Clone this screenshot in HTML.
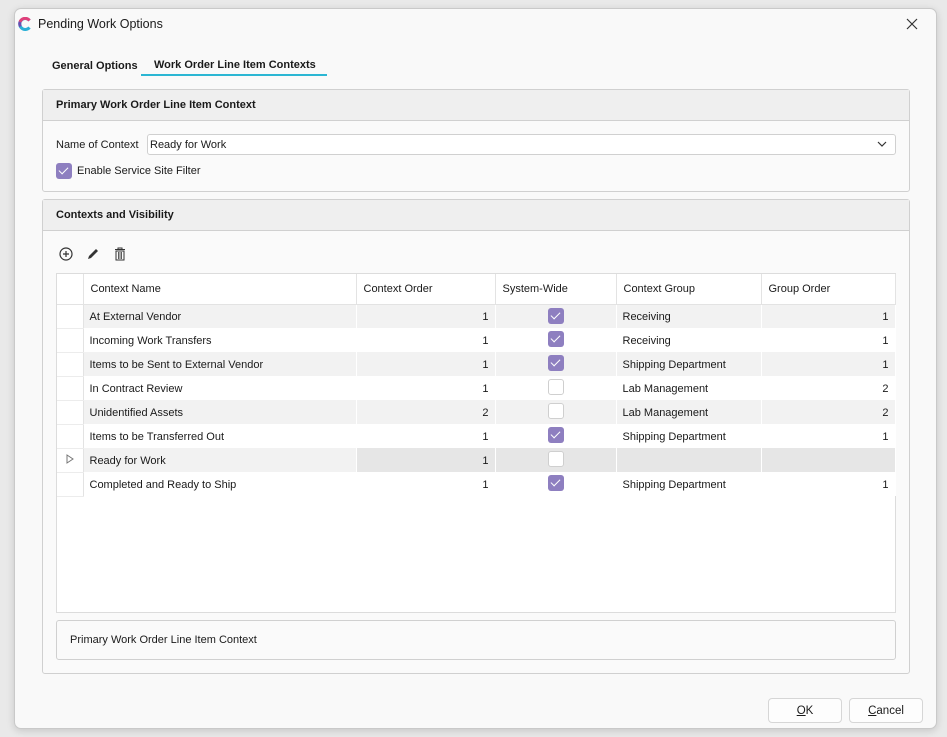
<!DOCTYPE html>
<html><head><style>
*{box-sizing:border-box;margin:0;padding:0}
body{width:947px;height:737px;background:#e9e9e9;font-family:"Liberation Sans",sans-serif;font-size:11px;color:#1a1a1a;position:relative;overflow:hidden}
.a{position:absolute}
.win{left:14px;top:8px;width:923px;height:721px;background:#f9f9f9;border:1px solid #c9c9c9;border-radius:7px;box-shadow:0 2px 8px rgba(0,0,0,.15)}
.panel{border:1px solid #d0d0d0;border-radius:3px;background:#fafafa}
.ph{background:#efefef;border-bottom:1px solid #d0d0d0;height:31px;line-height:31px;padding-left:13px;font-weight:bold;font-size:11px}
.cb{width:16px;height:16px;border-radius:3px;background:#8e7fc0;position:absolute}
.cb:after{content:"";position:absolute;left:5px;top:2px;width:4px;height:8px;border:solid #fff;border-width:0 1.3px 1.3px 0;transform:rotate(45deg)}
.ub{width:16px;height:16px;border-radius:3px;background:#fff;border:1px solid #cfcfcf;position:absolute}
table{border-collapse:collapse;table-layout:fixed}
td{height:24px;padding:1px 6px 0;white-space:nowrap;border-right:1px solid #fff;position:relative}
tr.h td{height:30px;background:#fff;border-right:1px solid #e3e3e3;border-bottom:1px solid #e3e3e3;padding-left:7px}
tr.g td{background:#f2f2f2}
tr.s td{background:#e6e6e6}
td.r{text-align:right}
td.rh{background:#fff!important;border-right:1px solid #e3e3e3;border-bottom:1px solid #ececec}
.btn{border:1px solid #d6d6d6;border-radius:4px;background:#fdfdfd;width:74px;height:25px;text-align:center;line-height:24px;font-size:11.5px}
</style></head><body>
<div class="a win"></div>
<svg class="a" style="left:18px;top:17px" width="14" height="14" viewBox="0 0 14 14"><path d="M11.5 3.5A5.5 5.5 0 1 0 11.5 10.5" fill="none" stroke="#2ab0d6" stroke-width="3"/><path d="M11.5 3.5A5.5 5.5 0 0 0 2 5" fill="none" stroke="#e0407a" stroke-width="3"/><path d="M2 5A5.5 5.5 0 0 0 2.5 9.5" fill="none" stroke="#6a4fb0" stroke-width="3"/></svg>
<div class="a" style="left:38px;top:17px;font-size:12.5px">Pending Work Options</div>
<svg class="a" style="left:906px;top:18px" width="12" height="12"><path d="M1 1L11 11M11 1L1 11" stroke="#333" stroke-width="1.2"/></svg>
<div class="a" style="left:52px;top:60px;font-weight:bold;font-size:11px">General Options</div>
<div class="a" style="left:154px;top:59px;font-weight:bold;font-size:11px">Work Order Line Item Contexts</div>
<div class="a" style="left:141px;top:74px;width:186px;height:2px;background:#2bb6d3"></div>

<div class="a panel" style="left:42px;top:89px;width:868px;height:103px"><div class="ph">Primary Work Order Line Item Context</div></div>
<div class="a" style="left:56px;top:139px">Name of Context</div>
<div class="a" style="left:147px;top:134px;width:749px;height:21px;border:1px solid #d0d0d0;border-radius:3px;background:#fff;padding:4px 0 0 2px">Ready for Work</div>
<svg class="a" style="left:877px;top:141px" width="10" height="6"><path d="M1 1L5 5L9 1" stroke="#333" fill="none" stroke-width="1.2"/></svg>
<div class="cb" style="left:56px;top:163px"></div>
<div class="a" style="left:77px;top:165px">Enable Service Site Filter</div>

<div class="a panel" style="left:42px;top:199px;width:868px;height:475px"><div class="ph">Contexts and Visibility</div></div>
<svg class="a" style="left:59px;top:247px" width="14" height="14"><circle cx="7" cy="7" r="6" fill="none" stroke="#333" stroke-width="1.2"/><path d="M7 4V10M4 7H10" stroke="#333" stroke-width="1.2"/></svg>
<svg class="a" style="left:86px;top:247px" width="14" height="14"><path d="M2 12L3 9L10 2L12 4L5 11Z" fill="#333"/></svg>
<svg class="a" style="left:114px;top:247px" width="12" height="14"><path d="M1 2.5H11M4 2.5V1H8V2.5" stroke="#333" fill="none"/><path d="M2 4H10V13H2Z" fill="none" stroke="#333"/><path d="M4.5 5V12M6 5V12M7.5 5V12" stroke="#333" stroke-width=".8"/></svg>

<div class="a" style="left:56px;top:273px;width:840px;height:340px;border:1px solid #dcdcdc;background:#fff">
<table style="width:838px">
<colgroup><col style="width:26px"><col style="width:273px"><col style="width:139px"><col style="width:121px"><col style="width:145px"><col style="width:134px"></colgroup>
<tr class="h"><td class="rh"></td><td>Context Name</td><td>Context Order</td><td>System-Wide</td><td>Context Group</td><td>Group Order</td></tr>
<tr class="g"><td class="rh"></td><td>At External Vendor</td><td class="r">1</td><td><div class="cb" style="left:52px;top:3px"></div></td><td>Receiving</td><td class="r">1</td></tr>
<tr><td class="rh"></td><td>Incoming Work Transfers</td><td class="r">1</td><td><div class="cb" style="left:52px;top:3px"></div></td><td>Receiving</td><td class="r">1</td></tr>
<tr class="g"><td class="rh"></td><td>Items to be Sent to External Vendor</td><td class="r">1</td><td><div class="cb" style="left:52px;top:3px"></div></td><td>Shipping Department</td><td class="r">1</td></tr>
<tr><td class="rh"></td><td>In Contract Review</td><td class="r">1</td><td><div class="ub" style="left:52px;top:3px"></div></td><td>Lab Management</td><td class="r">2</td></tr>
<tr class="g"><td class="rh"></td><td>Unidentified Assets</td><td class="r">2</td><td><div class="ub" style="left:52px;top:3px"></div></td><td>Lab Management</td><td class="r">2</td></tr>
<tr><td class="rh"></td><td>Items to be Transferred Out</td><td class="r">1</td><td><div class="cb" style="left:52px;top:3px"></div></td><td>Shipping Department</td><td class="r">1</td></tr>
<tr class="s"><td class="rh"><svg width="8" height="10" style="margin-left:3px"><path d="M1 1L7 5L1 9Z" fill="none" stroke="#777"/></svg></td><td style="background:#f2f2f2">Ready for Work</td><td class="r">1</td><td><div class="ub" style="left:52px;top:3px"></div></td><td></td><td></td></tr>
<tr><td class="rh"></td><td>Completed and Ready to Ship</td><td class="r">1</td><td><div class="cb" style="left:52px;top:3px"></div></td><td>Shipping Department</td><td class="r">1</td></tr>
</table></div>

<div class="a" style="left:56px;top:620px;width:840px;height:40px;border:1px solid #d0d0d0;border-radius:3px;background:#fafafa;padding:13px 0 0 13px">Primary Work Order Line Item Context</div>

<div class="a btn" style="left:768px;top:698px"><u>O</u>K</div>
<div class="a btn" style="left:849px;top:698px"><u>C</u>ancel</div>
</body></html>
